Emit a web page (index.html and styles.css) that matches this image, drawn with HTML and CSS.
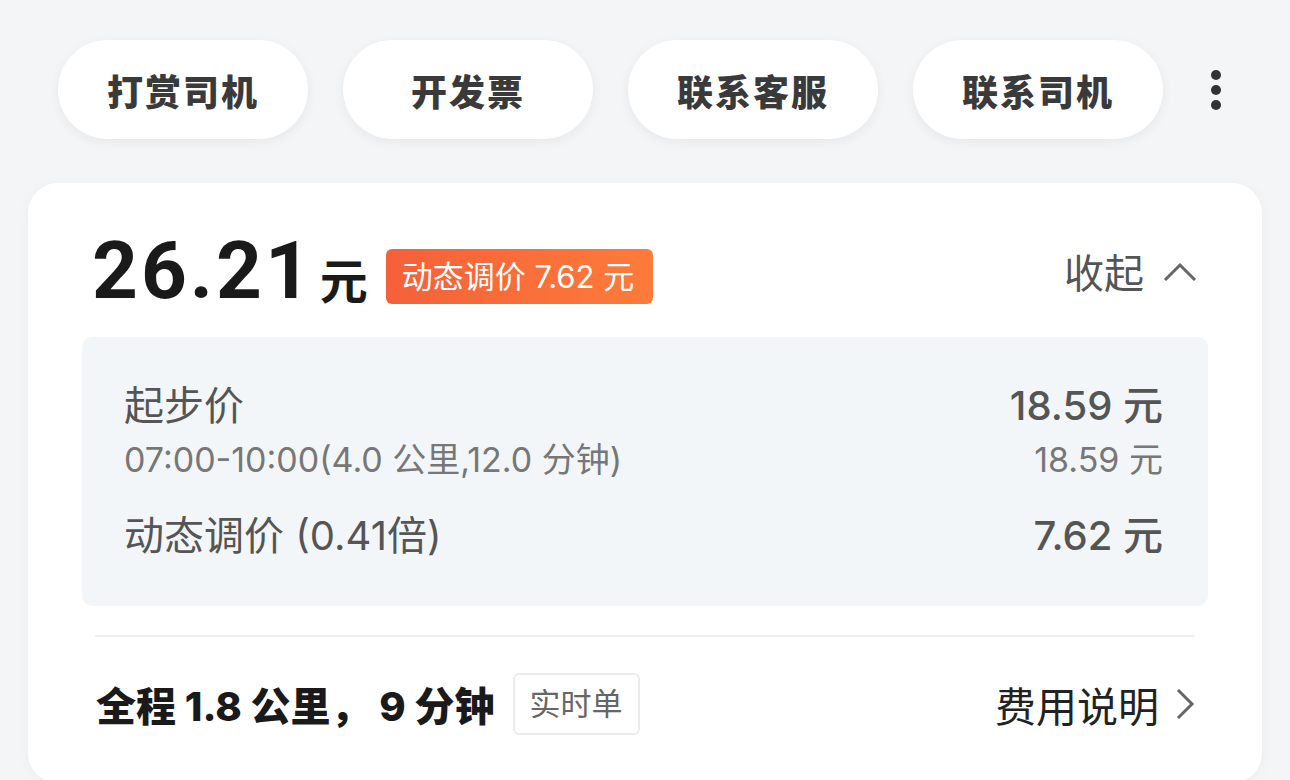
FILE: index.html
```html
<!DOCTYPE html>
<html lang="zh-CN">
<head>
    <meta charset="UTF-8">
    <meta name="viewport" content="width=device-width, initial-scale=1.0">
    <title>订单详情</title>
    <link rel="stylesheet" href="styles.css">
</head>
<body>
    <div class="actions">
        <button class="pill">打赏司机</button>
        <button class="pill">开发票</button>
        <button class="pill">联系客服</button>
        <button class="pill">联系司机</button>
        <button class="more" aria-label="更多">
            <span></span><span></span><span></span>
        </button>
    </div>

    <div class="card">
        <div class="head">
            <div class="total">
                <span class="amount">26.21</span><span class="unit">元</span>
                <span class="surge">动态调价 7.62 元</span>
            </div>
            <div class="fold">
                收起
                <svg width="36" height="24" viewBox="0 0 36 24"><path d="M3 21 L18 6 L33 21" fill="none" stroke="#666" stroke-width="3"/></svg>
            </div>
        </div>

        <div class="detail">
            <div class="row">
                <span class="label">起步价</span>
                <span class="value">18.59 元</span>
            </div>
            <div class="row sub">
                <span>07:00-10:00(4.0 公里,12.0 分钟)</span>
                <span>18.59 元</span>
            </div>
            <div class="row gap">
                <span class="label">动态调价 (0.41倍)</span>
                <span class="value">7.62 元</span>
            </div>
        </div>

        <div class="line"></div>

        <div class="foot">
            <div class="trip">
                <span class="dist">全程 1.8 公里， 9 分钟</span>
                <span class="tag">实时单</span>
            </div>
            <div class="explain">
                费用说明
                <svg width="20" height="34" viewBox="0 0 20 34"><path d="M3 3 L17 17 L3 31" fill="none" stroke="#666" stroke-width="3"/></svg>
            </div>
        </div>
    </div>
</body>
</html>
```

FILE: styles.css
```css
*{
    margin: 0;
    padding: 0;
    box-sizing: border-box;
    font-family: "Inter", "Noto Sans CJK SC", sans-serif;
}

body{
    background: #f3f5f7;
    width: 1290px;
    height: 780px;
    overflow: hidden;
}

.actions{
    display: flex;
    align-items: center;
    gap: 35px;
    padding: 40px 0 0 58px;
}
.pill{
    width: 250px;
    height: 99px;
    border: 0;
    border-radius: 50px;
    background: #fff;
    box-shadow: 0 3px 12px rgba(0, 0, 0, 0.06);
    font-size: 36px;
    font-weight: 900;
    color: #3a3a3a;
    letter-spacing: 2px;
}
.more{
    border: 0;
    background: none;
    display: flex;
    flex-direction: column;
    gap: 5px;
    margin-left: 13px;
}
.more span{
    width: 10px;
    height: 10px;
    border-radius: 50%;
    background: #333;
}

.card{
    margin: 44px 28px 0;
    height: 600px;
    background: #fff;
    border-radius: 30px;
    padding: 0 54px;
    box-shadow: 0 2px 14px rgba(0, 0, 0, 0.04);
}

.head{
    display: flex;
    justify-content: space-between;
    align-items: center;
    padding: 44px 10px 22px 10px;
    height: 154px;
}
.total{
    display: flex;
    align-items: center;
}
.amount{
    font-family: "Roboto", sans-serif;
    font-size: 80px;
    font-weight: 700;
    color: #1a1a1a;
    letter-spacing: 3px;
}
.unit{
    font-family: "Noto Sans CJK SC", sans-serif;
    font-size: 48px;
    font-weight: 700;
    color: #1a1a1a;
    margin: 14px 0 0 6px;
}
.surge{
    margin: 10px 0 0 18px;
    height: 55px;
    line-height: 55px;
    padding: 0 19px 0 16px;
    border-radius: 6px;
    background: linear-gradient(90deg, #f5603a, #fe7b39);
    color: #fff;
    font-size: 31px;
}
.fold{
    display: flex;
    align-items: center;
    gap: 18px;
    font-size: 40px;
    color: #555;
}

.detail{
    background: #f3f6f8;
    border-radius: 10px;
    height: 269px;
    padding: 42px 45px 0 42px;
}
.row{
    display: flex;
    justify-content: space-between;
    align-items: center;
    color: #555;
}
.row .label, .row .value{
    font-size: 40px;
    line-height: 54px;
}
.row .value{
    font-weight: 500;
}
.row.sub{
    font-size: 34px;
    color: #777;
    line-height: 44px;
    margin-top: 5px;
}
.row.gap{
    margin-top: 27px;
}

.line{
    margin: 29px 13px 0;
    height: 2px;
    background: #eeeeee;
}

.foot{
    display: flex;
    justify-content: space-between;
    align-items: center;
    padding: 36px 13px 0 14px;
}
.trip{
    display: flex;
    align-items: center;
    gap: 18px;
}
.dist{
    font-size: 40px;
    font-weight: 800;
    color: #1a1a1a;
}
.tag{
    border: 2px solid #ebebeb;
    border-radius: 6px;
    height: 62px;
    line-height: 58px;
    padding: 0 15px;
    font-size: 31px;
    color: #666;
}
.explain{
    display: flex;
    align-items: center;
    gap: 16px;
    font-size: 41px;
    color: #222;
}
```
